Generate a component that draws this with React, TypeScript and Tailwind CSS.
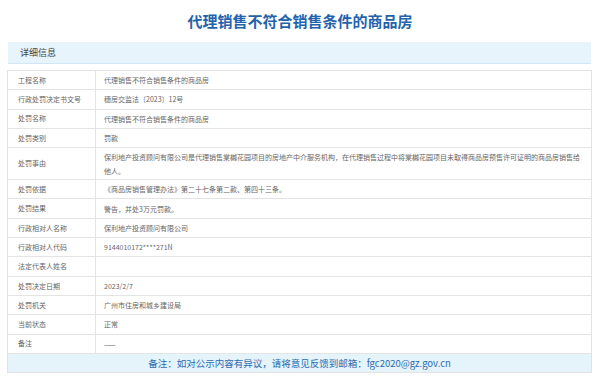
const rows: { label: string; value: string; tall?: boolean }[] = [
  { label: "工程名称", value: "代理销售不符合销售条件的商品房" },
  { label: "行政处罚决定书文号", value: "穗房交监法〔2023〕12号" },
  { label: "处罚名称", value: "代理销售不符合销售条件的商品房" },
  { label: "处罚类别", value: "罚款" },
  {
    label: "处罚事由",
    value:
      "保利地产投资顾问有限公司是代理销售棠樾花园项目的房地产中介服务机构，在代理销售过程中将棠樾花园项目未取得商品房预售许可证明的商品房销售给他人。",
    tall: true,
  },
  { label: "处罚依据", value: "《商品房销售管理办法》第二十七条第二款、第四十三条。" },
  { label: "处罚结果", value: "警告，并处3万元罚款。" },
  { label: "行政相对人名称", value: "保利地产投资顾问有限公司" },
  { label: "行政相对人代码", value: "9144010172****271N" },
  { label: "法定代表人姓名", value: "" },
  { label: "处罚决定日期", value: "2023/2/7" },
  { label: "处罚机关", value: "广州市住房和城乡建设局" },
  { label: "当前状态", value: "正常" },
  { label: "备注", value: "——" },
];

export default function App() {
  return (
    <div className="h-[379px] w-[600px] bg-white font-['Microsoft_YaHei','Noto_Sans_CJK_SC',sans-serif]">
      <h1 className="h-[42px] pt-[10px] text-center text-[15px] font-bold leading-[22px] text-[#2363ac]">
        代理销售不符合销售条件的商品房
      </h1>
      <div className="ml-[8px] mr-[9px] flex h-[22px] items-center border-b border-[#d2e7f5] bg-[#e8f4fc] pl-[12px] text-[9px] text-[#444]">
        详细信息
      </div>
      <div className="mx-[7px] mr-[8px] mt-[6px] border border-[#e2e2e2]">
        {rows.map((row) => (
          <div
            key={row.label}
            className={`grid grid-cols-[88px_1fr] border-b border-[#e4e4e4] text-[7px] text-[#666] ${
              row.tall ? "h-[32px]" : "h-[19.3px]"
            }`}
          >
            <div className="flex items-center border-r border-[#e4e4e4] pl-[10px]">{row.label}</div>
            <div className="flex items-center px-[8px] leading-[14px]">{row.value}</div>
          </div>
        ))}
        <div className="flex h-[18px] items-center justify-center bg-[#e5f3fb] text-[9.5px] text-[#2a6bb0]">
          备注：如对公示内容有异议，请将意见反馈到邮箱：fgc2020@gz.gov.cn
        </div>
      </div>
    </div>
  );
}
